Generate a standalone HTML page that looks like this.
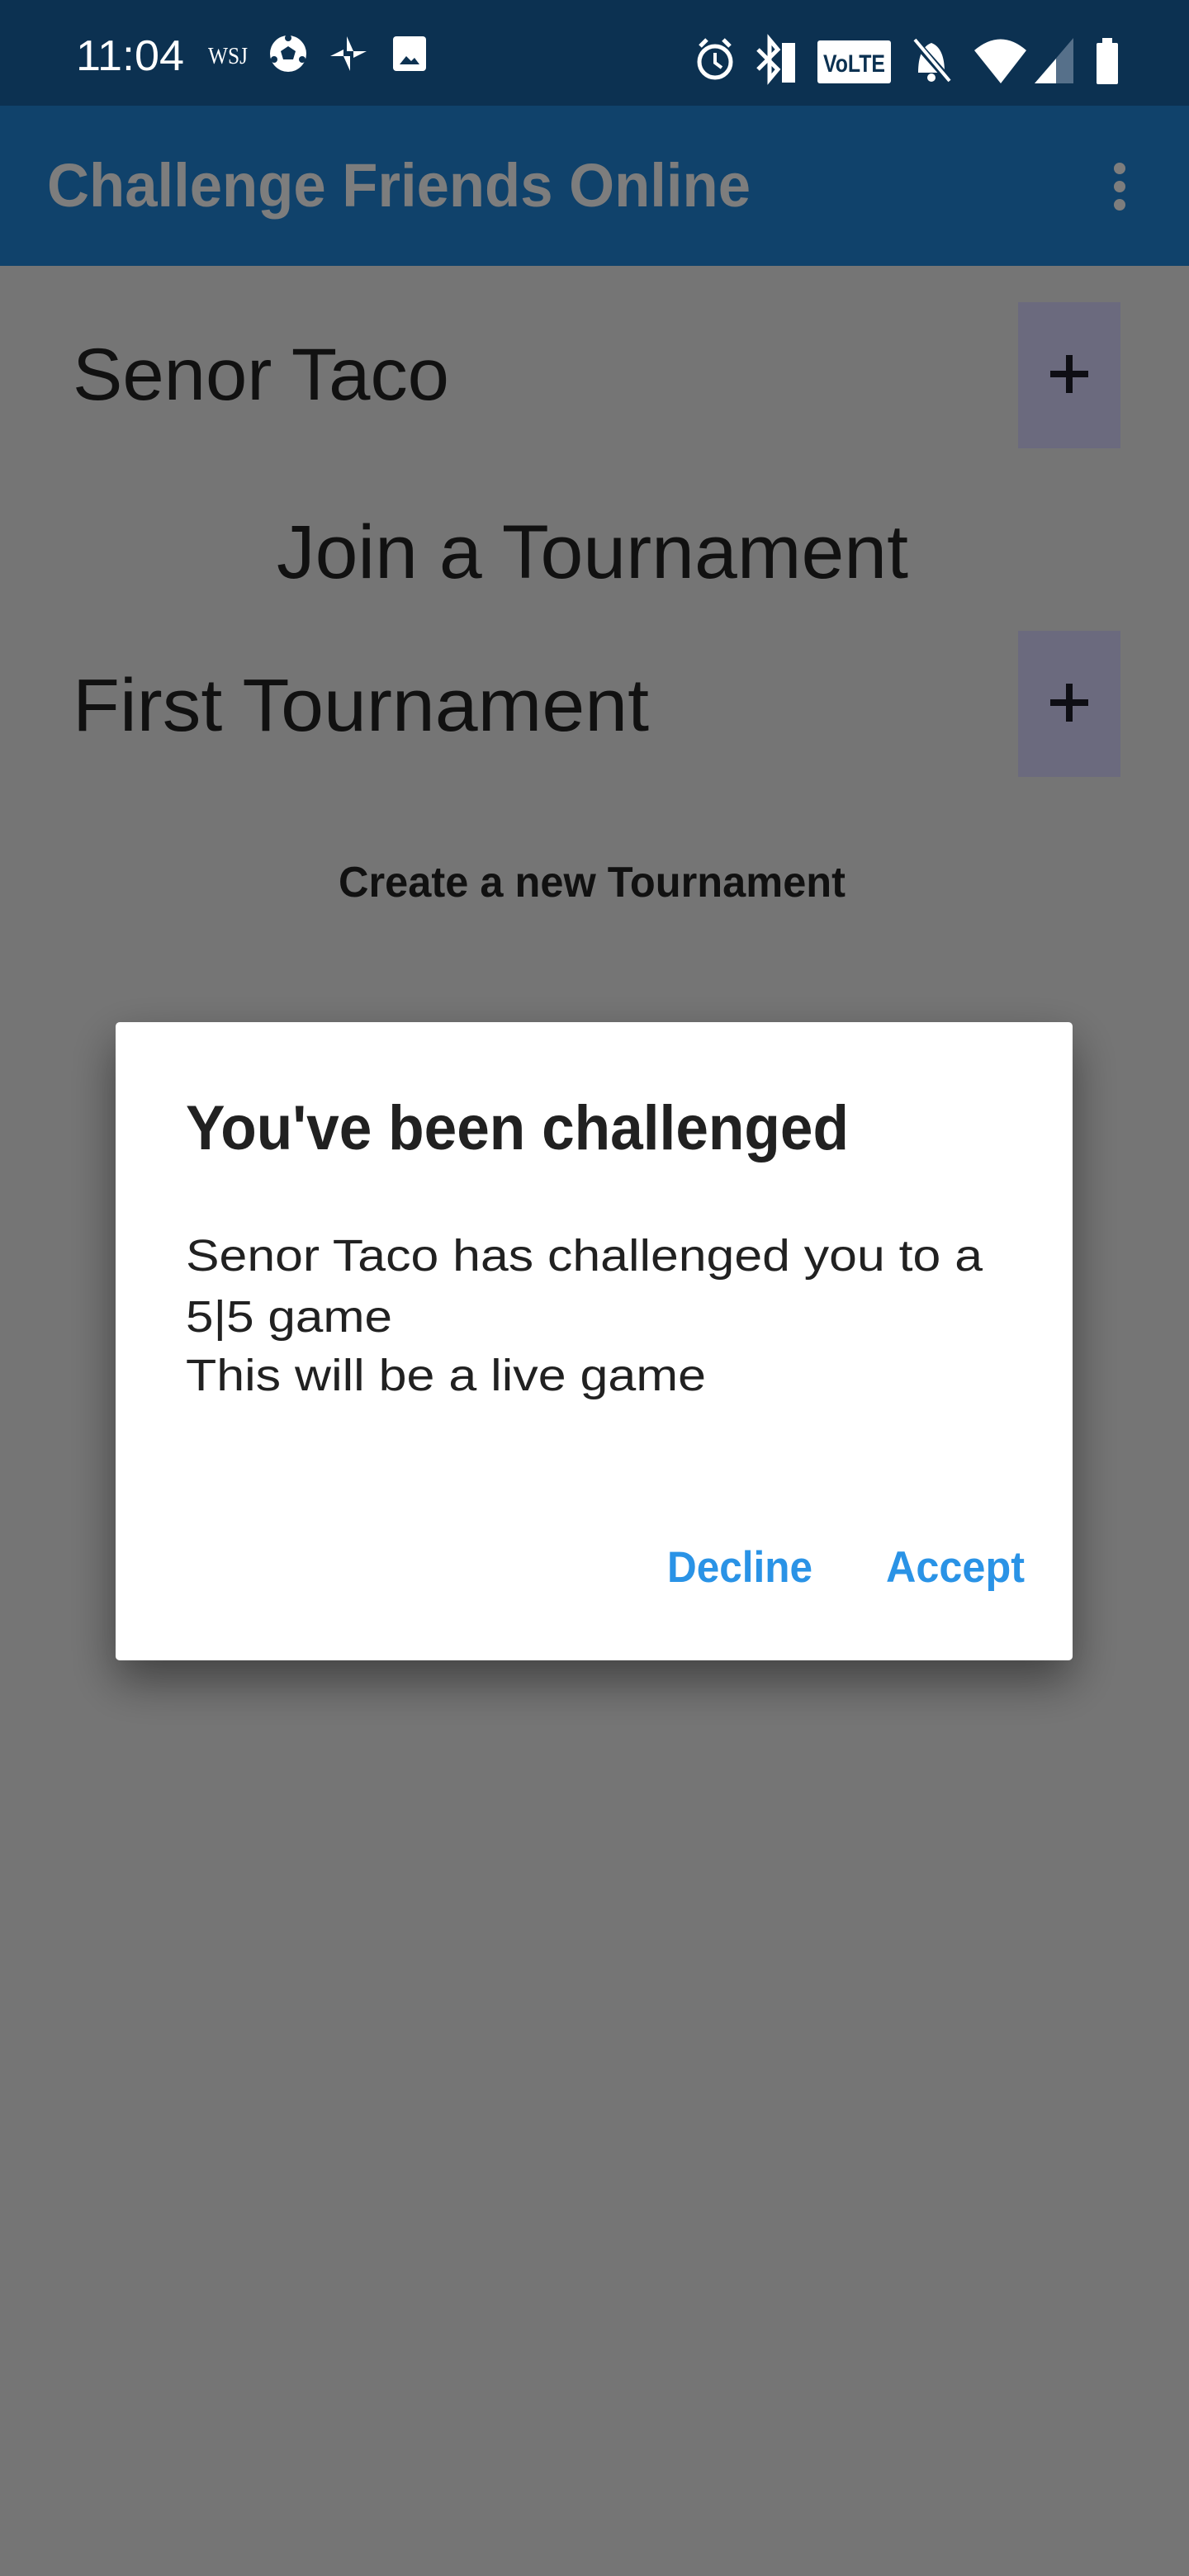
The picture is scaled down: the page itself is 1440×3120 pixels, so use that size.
<!DOCTYPE html>
<html><head><meta charset="utf-8"><style>
html,body{margin:0;padding:0;width:1440px;height:3120px;overflow:hidden;background:#757575}
svg{display:block}
text{font-family:"Liberation Sans",sans-serif}
</style></head><body>
<svg width="1440" height="3120" viewBox="0 0 1440 3120" xmlns="http://www.w3.org/2000/svg">
<defs>
<filter id="sh" x="-20%" y="-20%" width="140%" height="140%">
<feGaussianBlur in="SourceAlpha" stdDeviation="28"/>
<feOffset dy="24"/>
<feComponentTransfer><feFuncA type="linear" slope="0.45"/></feComponentTransfer>
<feMerge><feMergeNode/><feMergeNode in="SourceGraphic"/></feMerge>
</filter>
</defs>
<rect x="0" y="0" width="1440" height="3120" fill="#757575"/>
<!-- status bar -->
<rect x="0" y="0" width="1440" height="128" fill="#0c3151"/>
<text x="92" y="85" font-size="52" fill="#fff" textLength="131" lengthAdjust="spacingAndGlyphs">11:04</text>
<text x="252" y="77" font-size="28" fill="#fff" font-family="Liberation Serif" textLength="48" lengthAdjust="spacingAndGlyphs" style="font-family:'Liberation Serif',serif">WSJ</text>
<circle cx="349" cy="65" r="22" fill="#fff"/>
<polygon points="349,56 358,62 355,72 343,72 340,62" fill="#0c3151"/>
<circle cx="349" cy="46" r="4" fill="#0c3151"/><circle cx="366" cy="72" r="4" fill="#0c3151"/><circle cx="332" cy="72" r="4" fill="#0c3151"/>
<g fill="#fff"><polygon points="420,44 428,62 420,62"/><polygon points="444,62 428,70 428,62"/><polygon points="424,86 416,68 424,68"/><polygon points="400,68 416,60 416,68"/></g>
<rect x="476" y="44" width="40" height="42" rx="4" fill="#fff"/>
<polygon points="484,78 492,68 498,74 502,70 508,78" fill="#0c3151"/>
<!-- right icons -->
<circle cx="866" cy="75" r="19" fill="none" stroke="#fff" stroke-width="5"/>
<path d="M866 64 V76 L874 82" stroke="#fff" stroke-width="4" fill="none"/>
<path d="M848 56 L856 48 M884 56 L876 48" stroke="#fff" stroke-width="5"/>
<path d="M918 60 L942 84 L932 96 V48 L942 60 L918 84" stroke="#fff" stroke-width="5" fill="none"/>
<rect x="947" y="52" width="16" height="48" fill="#fff"/>
<rect x="990" y="49" width="89" height="52" rx="3" fill="#fff"/>
<text x="997" y="87" font-size="30" font-weight="bold" fill="#0c3151" textLength="75" lengthAdjust="spacingAndGlyphs">VoLTE</text>
<path d="M1112 88 Q1112 58 1128 52 Q1144 58 1144 88 Z" fill="#fff"/>
<circle cx="1128" cy="94" r="5" fill="#fff"/>
<path d="M1106 48 L1152 100" stroke="#0c3151" stroke-width="9"/>
<path d="M1108 48 L1150 98" stroke="#fff" stroke-width="4"/>
<path d="M1180 61 Q1212 34 1243 61 L1212 101 Z" fill="#fff"/>
<polygon points="1300,46 1300,101 1253,101" fill="#56708a"/>
<polygon points="1279,71 1279,101 1253,101" fill="#fff"/>
<rect x="1328" y="52" width="26" height="50" rx="2" fill="#fff"/>
<rect x="1335" y="46" width="12" height="7" fill="#fff"/>
<!-- app bar -->
<rect x="0" y="128" width="1440" height="194" fill="#10426b"/>
<text x="57" y="250" font-size="74" font-weight="bold" fill="#7d7d7d" textLength="852" lengthAdjust="spacingAndGlyphs">Challenge Friends Online</text>
<circle cx="1356" cy="204" r="7" fill="#7d7d7d"/><circle cx="1356" cy="226" r="7" fill="#7d7d7d"/><circle cx="1356" cy="248" r="7" fill="#7d7d7d"/>
<!-- content -->
<text x="88" y="484" font-size="89" fill="#111" textLength="456" lengthAdjust="spacingAndGlyphs">Senor Taco</text>
<rect x="1233" y="366" width="124" height="177" fill="#6b6a7e"/>
<path d="M1272 453 H1318 M1295 430 V476" stroke="#0e0e14" stroke-width="8"/>
<text x="335" y="700" font-size="92" fill="#111" textLength="765" lengthAdjust="spacingAndGlyphs">Join a Tournament</text>
<text x="88" y="885" font-size="90" fill="#111" textLength="698" lengthAdjust="spacingAndGlyphs">First Tournament</text>
<rect x="1233" y="764" width="124" height="177" fill="#6b6a7e"/>
<path d="M1272 851 H1318 M1295 828 V874" stroke="#0e0e14" stroke-width="8"/>
<text x="410" y="1086" font-size="52" font-weight="bold" fill="#111" textLength="614" lengthAdjust="spacingAndGlyphs">Create a new Tournament</text>
<!-- dialog -->
<rect x="140" y="1238" width="1159" height="773" rx="5" fill="#fff" filter="url(#sh)"/>
<text x="225" y="1392" font-size="76" font-weight="bold" fill="#212121" textLength="803" lengthAdjust="spacingAndGlyphs">You've been challenged</text>
<text x="225" y="1539" font-size="54" fill="#212121" textLength="965" lengthAdjust="spacingAndGlyphs">Senor Taco has challenged you to a</text>
<text x="225" y="1613" font-size="54" fill="#212121" textLength="250" lengthAdjust="spacingAndGlyphs">5|5 game</text>
<text x="225" y="1684" font-size="54" fill="#212121" textLength="630" lengthAdjust="spacingAndGlyphs">This will be a live game</text>
<text x="808" y="1916" font-size="53" font-weight="bold" fill="#2a93e6" textLength="176" lengthAdjust="spacingAndGlyphs">Decline</text>
<text x="1073" y="1916" font-size="53" font-weight="bold" fill="#2a93e6" textLength="168" lengthAdjust="spacingAndGlyphs">Accept</text>
</svg>
</body></html>
